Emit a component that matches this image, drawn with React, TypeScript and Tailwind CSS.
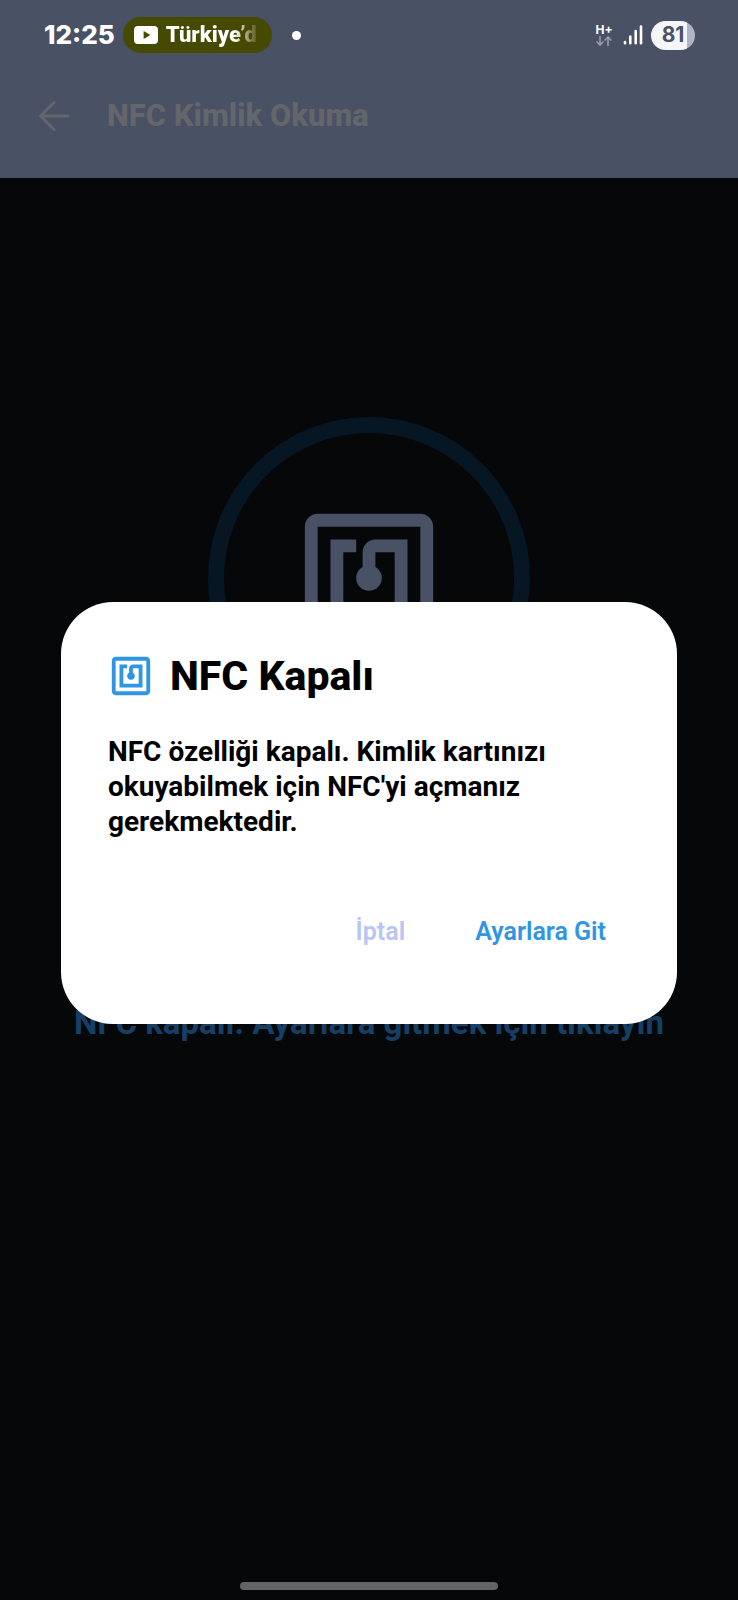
import type { ReactNode } from "react";

function NfcIcon({ className }: { className: string }) {
  return (
    <svg viewBox="0 0 24 24" fill="currentColor" className={className} aria-hidden="true">
      <path d="M20 2H4c-1.1 0-2 .9-2 2v16c0 1.1.9 2 2 2h16c1.1 0 2-.9 2-2V4c0-1.1-.9-2-2-2zm0 18H4V4h16v16zM18 6h-5c-1.1 0-2 .9-2 2v2.28c-.6.35-1 .98-1 1.72 0 1.1.9 2 2 2s2-.9 2-2c0-.74-.4-1.38-1-1.72V8h3v8H8V8h2V6H6v12h12V6z" />
    </svg>
  );
}

function StatusBar() {
  return (
    <div className="flex h-[70px] items-center pl-11 pr-[43px] font-['Inter',sans-serif] text-white">
      <time className="text-[26px] leading-8 font-extrabold">12:25</time>
      <div className="ml-2 flex h-9 w-[149px] items-center gap-2 rounded-full bg-[#464900] pl-[11px]">
        <svg viewBox="0 0 24 18" className="h-[18px] w-6 shrink-0" aria-hidden="true">
          <rect width="24" height="18" rx="4" fill="#fff" />
          <path d="M9.6 5v8l6.8-4z" fill="#464900" />
        </svg>
        <span className="bg-linear-to-r from-white from-75% to-white/10 bg-clip-text font-['Roboto',sans-serif] text-[22px] leading-8 font-black whitespace-nowrap text-transparent">
          Türkiye’d
        </span>
      </div>
      <span className="ml-5 size-[9px] rounded-full bg-white" />
      <div className="ml-auto flex items-center">
        <div className="flex w-[18px] flex-col items-center">
          <span className="text-[12px] leading-3 font-bold">H+</span>
          <svg viewBox="0 0 16 10" className="h-[10px] w-4" fill="none" stroke="#9a9eb0" strokeWidth="1.5" aria-hidden="true">
            <path d="M4 0v9M0.6 5.4L4 9l3.4-3.6M12 10V1M8.6 4.6L12 1l3.4 3.6" />
          </svg>
        </div>
        <svg viewBox="0 0 20 20" className="ml-2.5 size-5" stroke="#fff" strokeWidth="2.6" strokeLinecap="round" aria-hidden="true">
          <path d="M2 17v1.3M7.3 11.5v6.8M12.7 6v12.3M18 1.5v16.8" />
        </svg>
        <span className="ml-2 flex h-[29px] w-11 items-center justify-center rounded-full bg-linear-to-r from-[#f4f6fa] from-82% to-[#b0b3c1] to-82% text-[21px] leading-7 font-bold text-[#495165]">
          81
        </span>
      </div>
    </div>
  );
}

function Dialog({ title, children }: { title: string; children: ReactNode }) {
  return (
    <div className="fixed inset-0 flex items-center justify-center px-[61px] pt-[26px]">
      <section role="dialog" aria-label={title} className="w-full rounded-[52px] bg-white px-[47px] pt-[46px] pb-[60px] text-black">
        <h2 className="flex items-center gap-4 text-[41px] leading-[56px] font-extrabold">
          <NfcIcon className="size-[46px] text-[#2f95e4]" />
          {title}
        </h2>
        {children}
      </section>
    </div>
  );
}

export default function App() {
  return (
    <div className="flex min-h-screen flex-col bg-[#050709] font-['Roboto',sans-serif]">
      <header className="h-[178px] bg-[#495165]">
        <StatusBar />
        <div className="flex h-[92px] items-center gap-[37px] pl-[38px] text-[#64666a]">
          <button type="button" aria-label="Geri">
            <svg viewBox="0 0 32 32" className="size-8" fill="none" stroke="currentColor" strokeWidth="3" strokeLinecap="round" strokeLinejoin="round" aria-hidden="true">
              <path d="M16 2.5L2.5 16L16 29.5M2.5 16H30" />
            </svg>
          </button>
          <h1 className="text-[31px] leading-9 font-extrabold">NFC Kimlik Okuma</h1>
        </div>
      </header>

      <main className="flex grow flex-col items-center px-6 pt-[239px]">
        <div className="flex size-[322px] items-center justify-center rounded-full border-16 border-[#071623] text-[#495165]">
          <NfcIcon className="size-[154px]" />
        </div>
        <button type="button" className="mt-[264px] text-[33px] leading-10 font-bold text-[#153f65]">
          NFC kapalı. Ayarlara gitmek için tıklayın
        </button>
      </main>

      <footer className="flex justify-center pb-[10px]">
        <span className="h-2 w-[258px] rounded-full bg-[#636466]" />
      </footer>

      <Dialog title="NFC Kapalı">
        <p className="mt-[30px] text-[28px] leading-[35px] font-bold">
          NFC özelliği kapalı. Kimlik kartınızı okuyabilmek için NFC'yi açmanız gerekmektedir.
        </p>
        <div className="mt-[60px] flex justify-end text-[25px] font-semibold">
          <button type="button" className="h-[65px] px-[35px] text-[#b9c6f5]">
            İptal
          </button>
          <button type="button" className="h-[65px] pl-[35px] pr-6 text-[#2f95e4]">
            Ayarlara Git
          </button>
        </div>
      </Dialog>
    </div>
  );
}
